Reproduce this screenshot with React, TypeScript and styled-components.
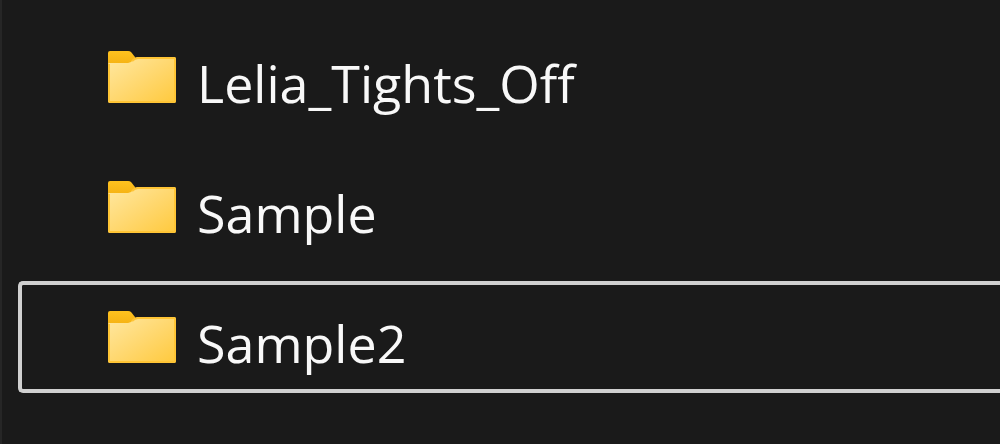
import React, { useState } from "react";
import styled, { createGlobalStyle } from "styled-components";

const GlobalStyle = createGlobalStyle`
  * { box-sizing: border-box; }
  body {
    margin: 0;
    background: #1a1a1a;
    overflow-x: hidden;
  }
`;

const Pane = styled.main`
  min-height: 100vh;
  border-left: 2px solid #262626;
  padding: 21px 0 21px 16px;
`;

const FolderList = styled.ul`
  list-style: none;
  margin: 0;
  padding: 0;
  display: flex;
  flex-direction: column;
  gap: 18px;
`;

const Row = styled.button<{ $focused: boolean }>`
  display: flex;
  align-items: center;
  gap: 21px;
  width: 100%;
  height: 112px;
  padding: 0 0 0 86px;
  background: transparent;
  border: 4px solid ${(p) => (p.$focused ? "#d0d0d0" : "transparent")};
  border-right: 0;
  border-radius: 5px 0 0 5px;
  outline: none;
  color: #f8f8f8;
  font-family: "Open Sans", "Noto Sans", sans-serif;
  font-size: 52px;
  line-height: 72px;
  text-align: left;
  white-space: nowrap;
`;

const Icon = styled.svg`
  flex: none;
  width: 68px;
  height: 52px;
`;

const Name = styled.span`
  padding-top: 12px;
`;

function FolderIcon({ id }: { id: string }) {
  return (
    <Icon viewBox="0 0 68 52" aria-hidden="true">
      <defs>
        <linearGradient id={id} x1="0" y1="0" x2="1" y2="1">
          <stop offset="0" stopColor="#ffe8a2" />
          <stop offset="0.5" stopColor="#ffd870" />
          <stop offset="1" stopColor="#ffc93c" />
        </linearGradient>
        <linearGradient id={`${id}-tab`} x1="0" y1="0" x2="0" y2="1">
          <stop offset="0" stopColor="#ffc21f" />
          <stop offset="1" stopColor="#f3af12" />
        </linearGradient>
      </defs>
      <path d="M0 2Q0 0 2 0H20Q22 0 23 1L27 6V16H0Z" fill={`url(#${id}-tab)`} />
      <path
        d="M0 13Q0 12 2 12H20Q23 12 25 9Q27 6 30 6H66Q68 6 68 8V50Q68 52 66 52H2Q0 52 0 50Z"
        fill={`url(#${id})`}
      />
      <path
        d="M24 10Q27 7 30 7H66Q67 7 67 8V50Q67 51 66 51H2Q1 51 1 50V13"
        fill="none"
        stroke="#ffc535"
        strokeWidth="2"
      />
    </Icon>
  );
}

const folders = ["Lelia_Tights_Off", "Sample", "Sample2"];

export default function App() {
  const [focused, setFocused] = useState("Sample2");
  return (
    <>
      <GlobalStyle />
      <Pane>
        <FolderList>
          {folders.map((name) => (
            <li key={name}>
              <Row type="button" $focused={name === focused} onClick={() => setFocused(name)}>
                <FolderIcon id={`folder-${name}`} />
                <Name>{name}</Name>
              </Row>
            </li>
          ))}
        </FolderList>
      </Pane>
    </>
  );
}
